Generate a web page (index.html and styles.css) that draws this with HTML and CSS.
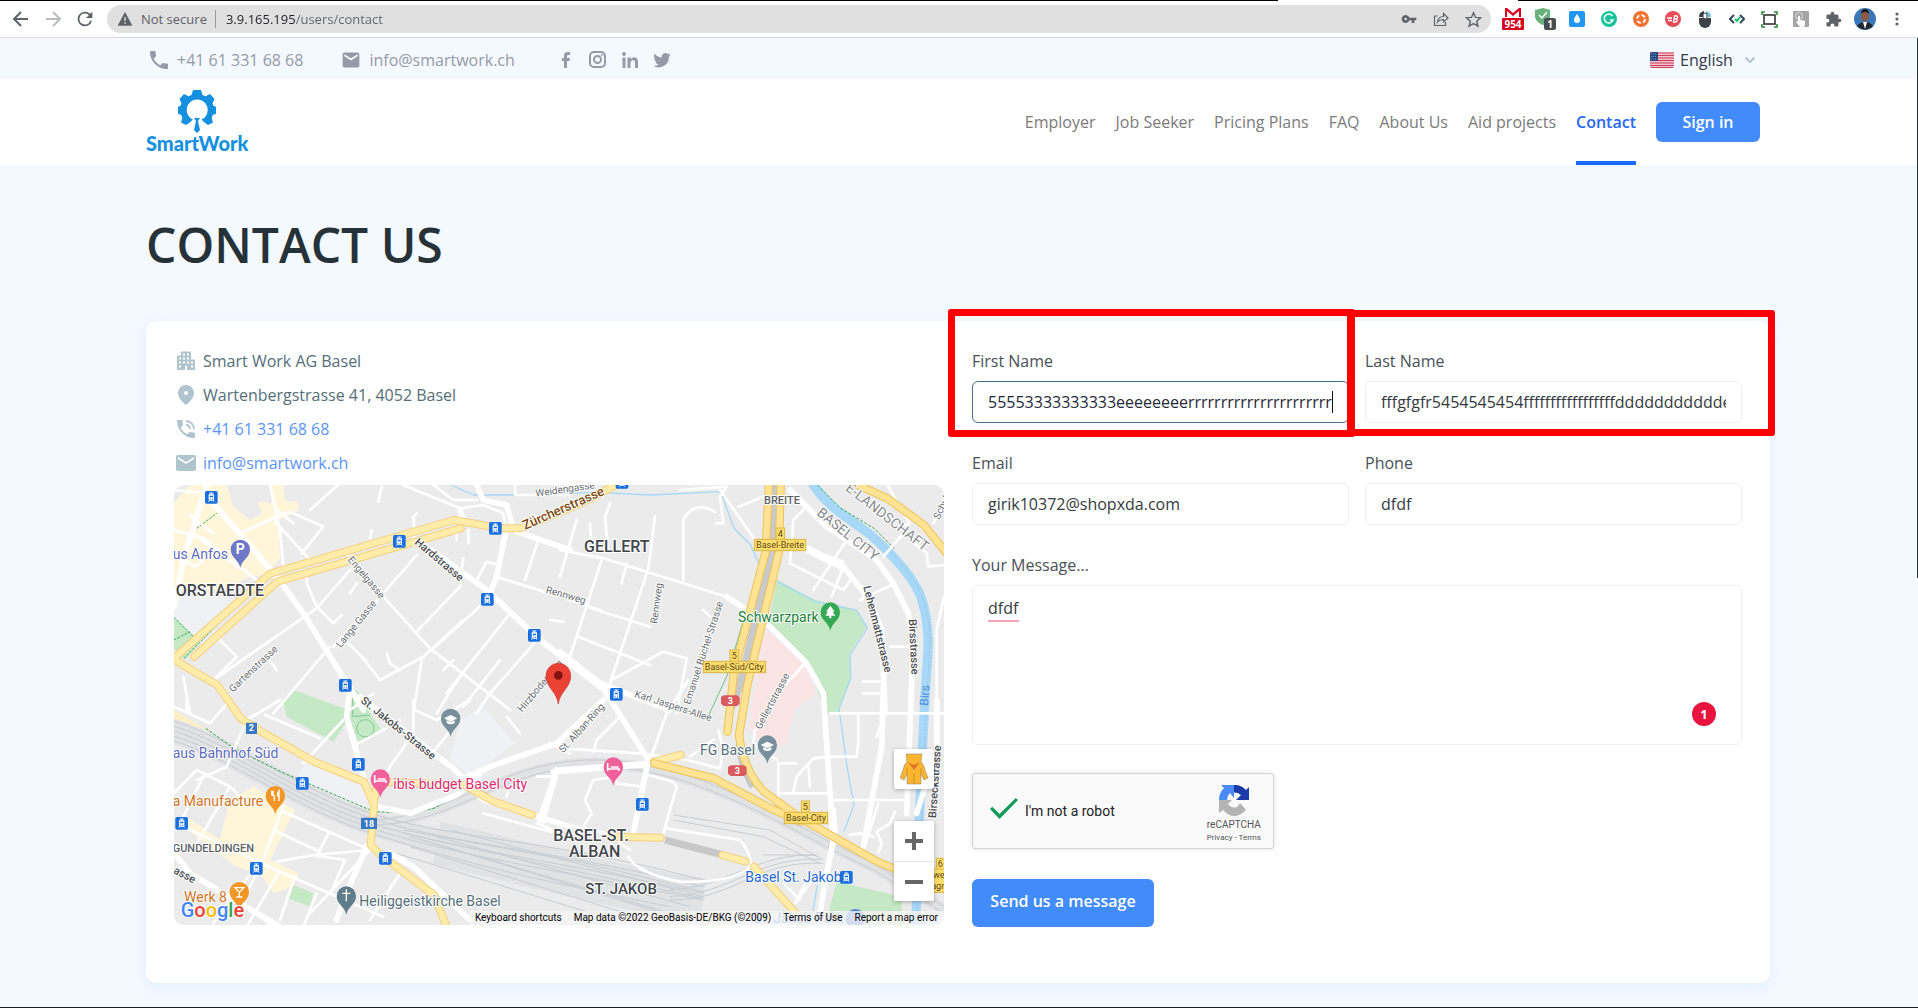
FILE: index.html
```html
<!DOCTYPE html>
<html lang="en">
<head>
<meta charset="utf-8">
<title>Contact us - SmartWork</title>
<link rel="stylesheet" href="styles.css">
</head>
<body>
<div class="chrome">
  <div class="tab-edge"><span></span></div>
  <div class="toolbar">
    <button class="slot" aria-label="Back"><svg width="24" height="24" viewBox="0 0 24 24" fill="none" stroke="#5f6368" stroke-width="2"><path d="M19 12H6M12 5l-7 7 7 7"/></svg></button>
    <button class="slot" aria-label="Forward"><svg width="24" height="24" viewBox="0 0 24 24" fill="none" stroke="#babcbe" stroke-width="2"><path d="M5 12h13M12 5l7 7-7 7"/></svg></button>
    <button class="slot" aria-label="Reload"><svg width="22" height="22" viewBox="0 0 24 24" fill="#5f6368"><path d="M17.65 6.35A8 8 0 1 0 19.73 14h-2.08A6 6 0 1 1 12 6c1.66 0 3.14.69 4.22 1.78L13 11h7V4z"/></svg></button>
    <div class="omnibox">
      <svg width="16" height="16" viewBox="0 0 24 24" fill="#5f6368"><path d="M1 22h22L12 1zm12-3h-2v-2h2zm0-4h-2V9h2z"/></svg>
      <span class="insecure">Not secure</span>
      <input class="url" aria-label="Address" value="3.9.165.195/users/contact">
      <button class="slot" aria-label="Passwords"><svg width="16" height="16" viewBox="0 0 24 24" fill="#5f6368"><path d="M12.65 10A6 6 0 1 0 12.65 14H16v4h4v-4h3v-4zM7 14a2 2 0 1 1 0-4 2 2 0 0 1 0 4z"/></svg></button>
      <button class="slot" aria-label="Share"><svg width="16" height="16" viewBox="0 0 16 16" fill="none" stroke="#5f6368" stroke-width="1.2"><path d="M4.5 5H1.500v9.500h11V11M4.500 11c.5-4 2.500-5.500 6-5.500V2.500L15 7l-4.500 4V8.500C8 8.500 6 9 4.500 11z"/></svg></button>
      <button class="slot" aria-label="Bookmark"><svg width="17" height="17" viewBox="0 0 24 24" fill="none" stroke="#5f6368" stroke-width="2"><path d="M12 2.500l2.900 6.600 7.100.6-5.400 4.700 1.600 7L12 17.700l-6.200 3.700 1.600-7L2 9.700l7.100-.6z"/></svg></button>
    </div>
    <div class="extensions">
      <button class="slot" aria-label="Mail checker"><svg width="22" height="22" viewBox="0 0 22 22"><path d="M3 0h16v10H3z" fill="#fff"/><path d="M3 9V0h2l6 5 6-5h2v9h-2V3l-6 5-6-5v6z" fill="#d8001d"/><rect y="10" width="22" height="12" rx="1" fill="#d8001d"/><text x="11" y="20" class="mark mark-10">954</text></svg></button>
      <button class="slot" aria-label="Ad guard"><svg width="22" height="22" viewBox="0 0 22 22"><path d="M1 2l8-2 7 2v7c0 4-3 6-7 8-5-2-8-5-8-9z" fill="#67b279"/><path d="M5 7l3 3 5-6" fill="none" stroke="#fff" stroke-width="1.500"/><rect x="10" y="10" width="12" height="12" rx="2" fill="#4a4d50"/><text x="16" y="20" class="mark mark-10">1</text></svg></button>
      <button class="slot" aria-label="Color picker"><svg width="16" height="16" viewBox="0 0 16 16"><rect width="16" height="16" rx="2" fill="#2196f3"/><path d="M8 3c2 3 3 4 3 6a3 3 0 0 1-6 0c0-2 1-3 3-6z" fill="#fff"/></svg></button>
      <button class="slot" aria-label="Grammar"><svg width="16" height="16" viewBox="0 0 16 16"><circle cx="8" cy="8" r="8" fill="#15c39a"/><path d="M11.500 5A4.500 4.500 0 1 0 12 9H9" fill="none" stroke="#fff" stroke-width="1.600"/></svg></button>
      <button class="slot" aria-label="Recorder"><svg width="16" height="16" viewBox="0 0 16 16"><circle cx="8" cy="8" r="8" fill="#f4712f"/><circle cx="8" cy="8" r="4" fill="none" stroke="#fff" stroke-width="2" stroke-dasharray="4 2.300"/></svg></button>
      <button class="slot" aria-label="Blaze"><svg width="16" height="16" viewBox="0 0 16 16"><circle cx="8" cy="8" r="8" fill="#e54b58"/><path d="M2 7h5M3 9.500h4M8.500 11l1-6h2.500q1.500 1.500-.5 3 1.500 1.500-.5 3zM9.500 8h2" fill="none" stroke="#fff" stroke-width="1.300"/></svg></button>
      <button class="slot" aria-label="Mouse"><svg width="14" height="18" viewBox="0 0 14 18"><path d="M1 8h12v4a6 6 0 0 1-12 0z" fill="#3d4248"/><path d="M1 7a6 6 0 0 1 5-6v6z" fill="#3d4248"/><path d="M13 7a6 6 0 0 0-5-6v6z" fill="#6ec1d8"/><rect x="5" y="3" width="4" height="6" rx="2" fill="#fff" stroke="#3d4248"/></svg></button>
      <button class="slot" aria-label="Code check"><svg width="16" height="12" viewBox="0 0 16 12" fill="none" stroke-width="2"><path d="M5 2L1 6l4 4M11 2l4 4-4 4" stroke="#33475b"/><path d="M6 6l2 2 3-4" stroke="#16c172"/></svg></button>
      <button class="slot" aria-label="Capture"><svg width="17" height="17" viewBox="0 0 17 17" fill="none"><rect x="3" y="4" width="11" height="9" stroke="#333" stroke-width="1.600"/><path d="M1 4V1h3M13 1h3v3M16 13v3h-3M4 16H1v-3" stroke="#2f8a36" stroke-width="1.600"/></svg></button>
      <button class="slot" aria-label="Touch"><svg width="16" height="16" viewBox="0 0 16 16"><rect width="16" height="16" rx="1" fill="#a5a5a5"/><circle cx="6" cy="5" r="3.500" fill="none" stroke="#ddd"/><path d="M5 5q1-1 2 0v4l5 1v4l-1 2H7l-4-5 2-1z" fill="#fff"/></svg></button>
      <button class="slot" aria-label="Extensions"><svg width="17" height="17" viewBox="0 0 24 24" fill="#5f6368"><path d="M20.500 11H19V7a2 2 0 0 0-2-2h-4V3.500a2.500 2.500 0 0 0-5 0V5H4a2 2 0 0 0-2 2v3.800h1.500a2.700 2.700 0 0 1 0 5.400H2V20a2 2 0 0 0 2 2h3.800v-1.500a2.700 2.700 0 0 1 5.400 0V22H17a2 2 0 0 0 2-2v-4h1.500a2.500 2.500 0 0 0 0-5z"/></svg></button>
      <button class="slot" aria-label="Profile"><svg width="22" height="22" viewBox="0 0 22 22"><circle cx="11" cy="11" r="11" fill="#3a78b8"/><path d="M3 18q3-4 8-4t8 4a11 11 0 0 1-16 0z" fill="#23272e"/><path d="M9 14h4l-2 7z" fill="#fff"/><ellipse cx="11" cy="8" rx="4" ry="5.500" fill="#8c5a45"/><path d="M7 6q0-5 4-5t4 5q-1-2-4-2t-4 2z" fill="#1b1a1c"/></svg></button>
      <button class="slot" aria-label="Menu"><svg width="4" height="16" viewBox="0 0 4 16" fill="#5f6368"><circle cx="2" cy="3" r="1.600"/><circle cx="2" cy="8" r="1.600"/><circle cx="2" cy="13" r="1.600"/></svg></button>
    </div>
  </div>
</div>

<div class="page">
  <div class="topbar">
    <div class="wrap topbar-row">
      <a class="top-link" href="#"><svg width="24" height="24" viewBox="0 0 24 24"><path d="M6.620 10.790c1.440 2.830 3.760 5.140 6.590 6.590l2.200-2.200c.27-.27.670-.36 1.020-.24 1.120.37 2.330.57 3.570.57.550 0 1 .450 1 1V20c0 .550-.45 1-1 1-9.390 0-17-7.610-17-17 0-.55.450-1 1-1h3.500c.550 0 1 .450 1 1 0 1.250.2 2.450.570 3.570.110.350.030.740-.25 1.020z"/></svg>+41 61 331 68 68</a>
      <a class="top-link top-mail" href="#"><svg width="20" height="20" viewBox="0 0 24 24"><path d="M20 3H4c-1.100 0-2 .9-2 2v14c0 1.100.9 2 2 2h16c1.100 0 2-.9 2-2V5c0-1.100-.9-2-2-2zm0 4.500l-8 5-8-5V5l8 5 8-5z"/></svg>info@smartwork.ch</a>
      <div class="social">
        <a href="#" aria-label="Facebook"><svg width="20" height="20" viewBox="0 0 20 20"><path d="M8 18v-7H6V8h2V6q0-4 3.500-4H14v3h-1.500Q11 5 11 6.300V8h3l-.5 3H11v7z"/></svg></a>
        <a href="#" aria-label="Instagram"><svg width="20" height="20" viewBox="0 0 20 20" fill="none" stroke="#949aa6" stroke-width="2"><rect x="2" y="2" width="15" height="15" rx="4"/><circle cx="9.500" cy="9.500" r="3.500"/><circle cx="14" cy="5" r=".3"/></svg></a>
        <a href="#" aria-label="LinkedIn"><svg width="20" height="20" viewBox="0 0 20 20"><circle cx="4" cy="4" r="2"/><path d="M2.500 7.500h3V18h-3zM7.500 7.500h3V9q3-3 6-1 1.500 1 1.500 4v6h-3v-5.500q0-2.500-2-2.500t-2.500 2.500V18h-3z"/></svg></a>
        <a href="#" aria-label="Twitter"><svg width="20" height="20" viewBox="0 0 24 24"><path d="M22.500 5.700c-.8.400-1.600.6-2.500.7.9-.5 1.600-1.400 1.900-2.400-.8.500-1.800.9-2.700 1.100a4.300 4.300 0 0 0-7.400 3.900C8.300 8.800 5.100 7.100 3 4.500a4.300 4.300 0 0 0 1.300 5.700c-.7 0-1.400-.2-1.900-.5a4.300 4.300 0 0 0 3.400 4.200c-.6.200-1.300.2-1.900.1a4.300 4.300 0 0 0 4 3A8.600 8.600 0 0 1 1.500 18.800 12.200 12.200 0 0 0 20.300 8c.9-.6 1.600-1.400 2.200-2.300z"/></svg></a>
      </div>
      <label class="language">
        <svg width="24" height="16" viewBox="0 0 24 16"><rect width="24" height="16" rx="2" fill="#f3c3cb"/><path d="M0 1h24M0 3.500h24M0 6h24M0 8.500h24M0 11h24M0 13.500h24M1 15.500h22" stroke="#d0405c" stroke-width="1.200"/><path d="M0 2q0-2 2-2h6v9H0z" fill="#274a80"/><path d="M1 2h6M1 4.500h6M1 7h6" stroke="#8fa5c8" stroke-width=".8" stroke-dasharray="1 1"/></svg>
        <select aria-label="Language"><option>English</option></select>
        <svg width="10" height="6" viewBox="0 0 10 6" fill="none" stroke="#b5c5cf" stroke-width="2"><path d="M.5.500L5 5 9.500.500"/></svg>
      </label>
    </div>
  </div>

  <header class="header">
    <div class="wrap header-row">
      <a class="logo" href="#">
        <svg width="40" height="44" viewBox="0 0 40 44"><path d="M16 1h8l1.500 5 3 1.200L33 5l4.500 5-2 4.500 1.200 2.500 2.300.8v7l-3.300 1.200-1 3 1.300 4.500-5 2.500-3.500-2.500-3-3a10.500 10.500 0 1 0-8.600 0l-3 3L9 36l-5-2.500L5.300 29l-1-3L1 24.800v-7l2.300-.8 1.200-2.500-2-4.500L7 5l4.500 2.200 3-1.200z"/><path d="M17 29h6l-2 3 2 9-3 3-3-3 2-9z"/></svg>
        <span>SmartWork</span>
      </a>
      <nav class="nav">
        <a href="#">Employer</a>
        <a href="#">Job Seeker</a>
        <a href="#">Pricing Plans</a>
        <a href="#">FAQ</a>
        <a href="#">About Us</a>
        <a href="#">Aid projects</a>
        <a class="current" href="#">Contact</a>
        <button class="btn btn-signin" type="button">Sign in</button>
      </nav>
    </div>
  </header>

  <main class="wrap main">
    <h1>CONTACT US</h1>
    <section class="card">
      <div class="info">
        <ul>
          <li><svg width="24" height="24" viewBox="0 0 24 24"><path fill-rule="evenodd" d="M3 6.500h4v-4h10v8h4V21h-8v-4h-2v4H3zm2 2v2h2v-2zm0 4v2h2v-2zm0 4v2h2v-2zm4-12v2h2v-2zm0 4v2h2v-2zm0 4v2h2v-2zm4-8v2h2v-2zm0 4v2h2v-2zm0 4v2h2v-2zm4 0v2h2v-2zm0 4v2h2v-2z"/></svg>Smart Work AG Basel</li>
          <li><svg width="24" height="24" viewBox="0 0 24 24"><path d="M12 2a8 8 0 0 0-8 8c0 4 3 8 8 12 5-4 8-8 8-12a8 8 0 0 0-8-8zm0 10a2 2 0 1 1 0-4 2 2 0 0 1 0 4z"/></svg>Wartenbergstrasse 41, 4052 Basel</li>
          <li><svg width="24" height="24" viewBox="0 0 24 24"><path d="M20 15.500c-1.250 0-2.450-.2-3.570-.57-.35-.11-.74-.03-1.020.24l-2.200 2.200a15 15 0 0 1-6.590-6.590l2.200-2.210c.28-.26.360-.65.250-1A11.400 11.400 0 0 1 8.500 4c0-.55-.45-1-1-1H4c-.55 0-1 .45-1 1 0 9.390 7.610 17 17 17 .55 0 1-.45 1-1v-3.500c0-.55-.45-1-1-1zM19 12h2a9 9 0 0 0-9-9v2c3.870 0 7 3.130 7 7zm-4 0h2c0-2.760-2.240-5-5-5v2c1.660 0 3 1.340 3 3z"/></svg><a href="#">+41 61 331 68 68</a></li>
          <li><svg width="24" height="24" viewBox="0 0 24 24"><path d="M20 4H4c-1.100 0-2 .9-2 2v12c0 1.100.9 2 2 2h16c1.100 0 2-.9 2-2V6c0-1.100-.9-2-2-2zm0 4l-8 5-8-5V6l8 5 8-5z"/></svg><a href="#">info@smartwork.ch</a></li>
        </ul>
        <div class="map">
          <svg class="map-canvas" viewBox="0 0 2310 1320" preserveAspectRatio="xMidYMid slice">
            <defs>
              <path id="pin" d="M0 56C-4 32-29 26-29 0A29 29 0 1 1 29 0C29 26 4 32 0 56Z"/>
              <g id="tram"><rect x="-19" y="-19" width="38" height="38" rx="5" fill="#1a6fe0"/><path d="M-6-13H6M0-13V-8" stroke="#fff" stroke-width="3"/><path fill-rule="evenodd" d="M-8-9H8V10H-8ZM-5-5H5V0H-5ZM-5 4H-2V7H-5ZM2 4H5V7H2Z" fill="#fff"/><path d="M-6 10l-3 4M6 10l3 4" stroke="#fff" stroke-width="2"/></g>
              <path id="shield3" d="M-28-12l8-5h40l8 5v20l-8 7h-40l-8-7z"/>
            </defs>
            <rect width="2310" height="1320" fill="#ebebeb"/>
            <!-- land use: north west, north east, south west, south east -->
            <g transform="translate(-12 -15)">
              <path fill="#fff6da" d="M12 70L60 15H170L190 80 240 120 275 100 265 65 310 70 305 15H340L345 60 388 70 380 95 325 120 330 235 290 285 240 290 150 330H12Z"/>
              <path fill="#eff1f4" d="M60 330L220 350 90 490 12 410V360Z"/>
              <path fill="#c5e8c5" d="M12 412L90 485 45 540 12 505ZM340 665L370 630 550 695 490 785 350 710Z"/>
              <path fill="none" stroke="#34a853" stroke-width="3" stroke-dasharray="8 4" d="M80 145L140 100M12 412L80 480M12 480L60 455M42 535L290 285"/>
            </g>
            <g transform="translate(1158 -15)">
              <path fill="#c5e8c5" d="M650 298L760 358 890 390 920 440 870 520 875 590 835 700 800 705 740 550 625 435Z"/>
              <path fill="#fbe5e4" d="M612 445L735 555 768 640 700 690 680 790 620 810 570 750 575 690Z"/>
            </g>
            <g transform="translate(-12 645)">
              <path fill="#fff0c4" d="M12 30L110 90 90 150 12 120Z"/>
              <path fill="#fff6da" d="M50 350L150 420 180 300 250 260 375 330 300 480 385 520 370 560 310 580 270 520 200 500 120 440 50 385Z"/>
              <path fill="#c5e8c5" d="M548-35L570-20 600 40 638 95 565 125 540 60ZM370 555L430 580 420 620 355 595Z"/>
              <path fill="none" stroke="#81c995" stroke-width="3" d="M548-20V50L600 45M560 85a26 26 0 1 0 52 0 26 26 0 1 0-52 0"/>
              <path fill="#eff1f4" d="M420 170L600 250 590 325 370 250ZM870 60L940 20 1035 130 900 230 840 180Z"/>
            </g>
            <g transform="translate(1158 645)"><path fill="#c5e8c5" d="M830 545L1025 590V680H795Z"/></g>
            <!-- railways -->
            <g fill="none" stroke="#dadde0" transform="translate(-12 645)">
              <path stroke-width="72" stroke="#e0e2e4" d="M0 90C180 140 380 300 620 375S1000 440 1330 560"/>
              <path stroke-width="130" stroke="#e0e2e4" d="M800 430C1000 470 1300 560 1600 600"/>
              <path stroke-width="34" stroke="#e0e2e4" d="M620 370C880 350 1000 180 1300 190S1850 380 2110 500L2340 640"/>
              <g stroke="#c8cdd1" stroke-width="3">
                <path d="M0 60C180 110 380 270 620 345S1100 410 1600 540M0 75C180 125 380 285 620 360S1100 440 1600 560M0 90C180 140 380 300 620 375S1100 470 1600 580M0 105C180 155 380 315 620 390S1100 500 1600 600M0 120C180 170 380 330 620 405S1000 520 1500 620"/>
                <path d="M620 360C880 340 1000 170 1300 180S1850 370 2110 490L2340 630M620 375C880 365 1000 190 1300 200S1850 390 2110 510L2340 650"/>
                <path d="M680 460L1330 660M720 440L1400 650M760 420L1480 640M800 410L1560 620M840 390L1600 590M700 390L1250 490 1600 575M700 400L1200 510 1600 595M720 410L1100 520 1500 640M1510 345L1800 390 1960 480M1510 360L1780 410 1950 490M1500 600C1700 600 1750 480 1960 490M1500 570C1680 560 1750 460 1940 465M1500 590C1690 580 1760 470 1950 478M1780 465H1940"/>
              </g>
              <path stroke="#c8c8c8" stroke-width="22" d="M1485 420L1660 465M1750 260Q1700 180 1710 90"/>
            </g>
            <!-- water -->
            <g fill="none" stroke="#a8d8f8">
              <path stroke-width="28" d="M1912 -10C1960 70 2035 105 2090 150C2170 220 2225 290 2242 340C2272 430 2262 510 2255 600C2245 800 2235 950 2225 1330"/>
              <path stroke-width="4" d="M830 0L900 30H1080L1270 22 1430 30 1640 20 1680 130 1730 180 1760 250M1810 290L1925 350 2048 375 2080 430 2028 510 2030 580 1995 670 2020 850 2040 960 2010 1040M1930 1200L1915 1290"/>
              <path stroke="#8aa0b0" stroke-width="2" stroke-dasharray="3 6" d="M2100 150C2175 220 2230 290 2247 340C2277 430 2267 510 2260 600L2228 1330"/>
            </g>
            <path fill="none" stroke="#34a853" stroke-width="3" stroke-dasharray="9 5" d="M1930 0L2000 70 2100 130 2160 190M95 730L180 790 320 860 600 980 700 985 780 970 870 920"/>
            <path fill="none" stroke="#34a853" stroke-width="2" d="M1710 400L1660 570 1600 700"/>
            <!-- minor streets -->
            <g class="street street-s">
              <g transform="translate(-12 -15)"><path d="M12 30L110 40M12 150L100 175 260 300M60 105L130 160M75 165L210 265M40 240L75 260 130 215M210 160L320 110 360 95 460 140M420 90L520 0M320 90L370 130M300 15L330 150 340 260M315 125L425 245M460 140L395 220M625 65L635 20M735 160L730 110 740 100M605 150L600 175M860 150V180M895 150V190M540 270L440 385 130 600M535 215V235L640 350 780 505 1020 690M740 225L640 340 490 500M560 310L540 340M410 280V310L440 380 490 430 515 405M880 235L870 320 740 455M940 370L785 510M915 310L950 245 985 255M980 290L1200 360 1290 390M1105 180L1065 300M985 290L960 340M1020 400L830 640M1110 470L960 640 920 700M480 500L310 700M535 490L580 535 630 600 760 530 880 420M650 520L660 550 690 570M755 540L730 700M820 570L850 540M875 580L800 700M990 540L880 680M150 480L200 530 130 600M290 530L320 570M40 590L60 700M700 15L870 85 880 120M790 15L850 60 920 60M870 85L940 75 1000 100 1005 130M1035 15V45H1200M540 690L610 640M1140 420L1180 425"/></g>
              <g transform="translate(1158 -15)"><path d="M0 210L130 235 500 350M90 130L95 200M50 120L0 290M150 70L135 110 145 215M285 110L265 265 150 610M125 240L30 530M370 300V120Q400 60 465 95M470 130H490L480 50 500 20 360 30M480 30L585 180M535 80L610 50M80 380L270 440M200 250L185 310M55 470L180 520 270 555M155 600L310 515 380 535 350 700M430 390L450 410M740 80L700 120 690 250 850 330 880 290M860 180L760 330M850 260L815 350M740 215L850 270M900 360L1005 310M735 550L670 620M720 200L850 245M1030 160L970 230M1050 180L1100 220 1105 260 1152 255M1120 130L1152 60M910 605H970M910 640H965M990 500H1045M1130 700V450L1152 350M985 20L1050 130 1020 140"/></g>
              <g transform="translate(-12 645)"><path d="M180 0L120 70 12 20M50 0V40M330 0L230 60 170 200 80 240M285 45L450 115M400 190L520 60M12 280L80 210 180 260 240 320M100 230L20 390M180 260L80 430M40 380L340 520 640 650M340 320L270 500 200 640M340 335L600 450 430 465 320 485M310 390L450 455M475 400L440 470M430 465L525 480 490 560M600 450L420 640M250 510L130 670M325 520L230 680M230 620L310 680M375 530L330 660M440 580L400 680M690 520L600 660M730 0L730 100 660 200 600 320M735 30L800 60 900 0M835 100L795 150M1100 230H1160L1120 370M1010 50L1050 100M1140 130L1200 160M1100 370L1150 390M1010 290L1020 260M565 130L620 100 690 60M940 340L1160 400"/></g>
              <g transform="translate(1158 645)"><path d="M0 145L240 160 380 180 480 205 490 150 475 90M100 155L110 120 180 50M270 180L320 40 385-60M390 170L460 120M265 225L340 245 350 260 310 400M245 260L170 250 165 220M170 230L100 240 75 300 95 340 70 380M205 470Q230 520 360 545 520 550 570 500 580 470 540 420L320 385M0 370L140 400 210 450M810 40H1150M655 290V190H710M700 275L710 230 760 175 820 170M660 280H810M745 200L750 260M650 180L580 130 585 90M895 40V130L890 170 820 170M960 80L950 110M820 300H1030M955 310L910 450M1005 335L990 370 950 395 965 430 955 455M870 405L900 400 940 410M670 550L720 600M740 540L705 610M750 550L720 590"/></g>
            </g>
            <g class="street street-l">
              <g transform="translate(-12 -15)"><path d="M110 15L40 240 12 380M130 70L320 290 400 400 580 690M735 175L950 330 1110 480 1290 620M1010 140L980 290 960 340M1040 155L1200 210M870 90L880 120M920 15L940 60 1010 75 1025 130"/></g>
              <g transform="translate(1158 -15)"><path d="M0 515L120 610M120 610L330 690M500 350L620 430 740 550 790 640 820 1090M745 205L850 260 930 360 965 450 975 700M690 30L800 140 950 240 1000 310 1045 400 1060 480 1040 1000"/></g>
              <g transform="translate(-12 645)"><path d="M540-40L530 50 600 300M570-10L850 205 940 300 1200 380M590 440L520 600 500 660M12 460L60 520 210 610 330 680M850 250L960 200 1160 130 1300 0M1160 210L1110 360M660 460L730 500 900 660M620 320L720 340 860 285 930 230M1150 215L1420 195"/></g>
              <g transform="translate(1158 645)"><path d="M120 -50L265 180 220 400M0 210L270 190M970-40L965 140 910 440M1130 0V150L1070 340M820 330L825 400 800 520 780 640"/></g>
            </g>
            <!-- main roads -->
            <g class="road-edge">
              <path d="M-12 530L290 265 840 105 980 130 1040 130 1220 55 1345 -10M60 515L310 290 860 130M-12 515L60 560 130 600 200 700 270 745 420 830 570 890 600 960 590 1080 620 1110 780 1230 820 1330M600 950L610 890 870 900 960 950 1075 990M1440 830L1520 810M1310 1055L1460 1058M1645 1110L1715 1130M1740 1145L1870 1290"/>
            </g>
            <g class="road-fill">
              <path d="M-12 530L290 265 840 105 980 130 1040 130 1220 55 1345 -10M60 515L310 290 860 130M-12 515L60 560 130 600 200 700 270 745 420 830 570 890 600 960 590 1080 620 1110 780 1230 820 1330M600 950L610 890 870 900 960 950 1075 990M1440 830L1520 810M1310 1055L1460 1058M1645 1110L1715 1130M1740 1145L1870 1290"/>
            </g>
            <path fill="none" stroke="#c8c9ca" stroke-width="26" d="M1805 -10L1795 200 1710 560 1670 670"/>
            <g class="highway-edge"><path d="M1785 -10L1775 200 1680 560 1660 740M1820 -10L1815 200 1720 600 1695 750Q1710 860 1770 920L1880 1000 2110 1130 2330 1220M1440 835L1620 880 1790 970 1880 1010M2030 -10L2140 40 2250 120 2330 220"/></g>
            <g class="highway"><path d="M1785 -10L1775 200 1680 560 1660 740M1820 -10L1815 200 1720 600 1695 750Q1710 860 1770 920L1880 1000 2110 1130 2330 1220M1440 835L1620 880 1790 970 1880 1010M2030 -10L2140 40 2250 120 2330 220"/></g>
            <!-- street names -->
            <g class="label label-street" transform="translate(-12 -15)">
              <text transform="translate(1098 50) rotate(-8)">Weidengasse</text>
              <text transform="translate(532 240) rotate(50)">Engelgasse</text>
              <text transform="translate(512 505) rotate(-51)">Lange Gasse</text>
              <text transform="translate(188 638) rotate(-43)">Gartenstrasse</text>
              <text transform="translate(1126 338) rotate(16)">Rennweg</text>
              <text transform="translate(1056 698) rotate(-50)">Hirzbodenweg</text>
              <text class="strong" transform="translate(732 190) rotate(40)">Hardstrasse</text>
              <text class="brown" transform="translate(1065 150) rotate(-24)">Zürcherstrasse</text>
            </g>
            <g class="label label-street" transform="translate(1158 -15)">
              <text transform="translate(292 432) rotate(-83)">Rennweg</text>
              <text transform="translate(390 675) rotate(-72)">Emanuel Büchel-Strasse</text>
              <text transform="translate(602 750) rotate(-62)">Gellertstrasse</text>
              <text transform="translate(222 650) rotate(18)">Karl Jaspers-Allee</text>
              <text transform="translate(10 820) rotate(-48)">St. Alban-Ring</text>
              <text transform="translate(1138 120) rotate(-65)">Schulstr.</text>
              <text class="strong" transform="translate(910 320) rotate(76)">Lehenmattstrasse</text>
              <text class="strong" transform="translate(1046 418) rotate(87)">Birsstrasse</text>
              <text class="water" transform="translate(1104 678) rotate(-86)">Birs</text>
            </g>
            <g class="label label-street" transform="translate(-12 645)">
              <text class="strong" transform="translate(570 5) rotate(39)">St. Jakobs-Strasse</text>
              <text class="strong" transform="translate(8 518) rotate(28)">asse</text>
            </g>
            <text class="label label-street strong" transform="translate(2286 1000) rotate(-86)">Birseckstrasse</text>
            <!-- districts -->
            <g class="label label-area">
              <text x="5" y="332">ORSTAEDTE</text>
              <text x="1230" y="202">GELLERT</text>
              <text class="area-s" x="1770" y="56">BREITE</text>
              <text class="border-name" transform="translate(1926 88) rotate(39)">BASEL CITY</text>
              <text class="border-name" transform="translate(2012 14) rotate(38)">E-LANDSCHAFT</text>
              <text class="area-s" x="-4" y="1102">GUNDELDINGEN</text>
              <text x="1138" y="1069">BASEL-ST.</text>
              <text x="1185" y="1117">ALBAN</text>
              <text x="1234" y="1227" class="area-m">ST. JAKOB</text>
            </g>
            <!-- places -->
            <g class="label label-place">
              <text x="-4" y="221" fill="#5c6bc0">us Anfos</text>
              <text x="-4" y="819" fill="#5c6bc0">aus Bahnhof Süd</text>
              <text x="1692" y="411" fill="#188038">Schwarzpark</text>
              <text x="658" y="912" fill="#e0286d">ibis budget Basel City</text>
              <text x="-4" y="963" fill="#d1731b">a Manufacture</text>
              <text x="30" y="1250" fill="#d1731b">Werk 8</text>
              <text x="556" y="1263" fill="#546e7a">Heiliggeistkirche Basel</text>
              <text x="1578" y="810" fill="#546e7a">FG Basel</text>
              <text x="1714" y="1190" fill="#1967d2">Basel St. Jakob</text>
              <text x="1738" y="1314" fill="#1967d2">St. Jakob Park</text>
            </g>
            <use href="#pin" x="199" y="193" fill="#6f78c8"/><text class="glyph" x="199" y="208">P</text>
            <use href="#pin" x="1969" y="381" fill="#34a853"/><path d="M1969 362l-13 18h6l-8 12h12v8h6v-8h12l-8-12h6z" fill="#fff"/>
            <use href="#pin" x="830" y="700" fill="#78909c"/><path d="M810 700l20-10 20 10-20 10zM818 706v8q12 8 24 0v-8l-12 6z" fill="#fff"/>
            <use href="#pin" x="1780" y="780" fill="#78909c"/><path d="M1760 780l20-10 20 10-20 10zM1768 786v8q12 8 24 0v-8l-12 6z" fill="#fff"/>
            <use href="#pin" x="619" y="882" fill="#f0609b"/><path d="M602 870v24M602 888h34v6M611 882h24" stroke="#fff" stroke-width="5" fill="none"/>
            <use href="#pin" x="1318" y="846" fill="#f0609b"/><path d="M1301 834v24M1301 852h34v6M1310 846h24" stroke="#fff" stroke-width="5" fill="none"/>
            <use href="#pin" x="304" y="932" fill="#f29727"/><path d="M297 917v10q0 6 4 6v15M293 917v9q0 6 8 6M315 917q-5 6-4 16h4zV948" stroke="#fff" stroke-width="4" fill="none"/>
            <use href="#pin" x="196" y="1220" fill="#f29727"/><path d="M183 1208h26l-13 14zM196 1220v16M187 1236h18" stroke="#fff" stroke-width="4" fill="none"/>
            <use href="#pin" x="517" y="1233" fill="#607d8b"/><path d="M517 1213v36M505 1225h24" stroke="#fff" stroke-width="4"/>
            <use href="#tram" x="112" y="37"/><use href="#tram" x="676" y="169"/><use href="#tram" x="964" y="130"/><use href="#tram" x="940" y="343"/><use href="#tram" x="1081" y="451"/><use href="#tram" x="514" y="601"/><use href="#tram" x="1327" y="628"/><use href="#tram" x="385" y="895"/><use href="#tram" x="553" y="838"/><use href="#tram" x="23" y="1015"/><use href="#tram" x="247" y="1150"/><use href="#tram" x="634" y="1120"/><use href="#tram" x="1405" y="958"/><use href="#tram" x="1344" y="-8"/><use href="#tram" x="2017" y="1177"/>
            <circle cx="2044" cy="1301" r="29" fill="#4d7fe0"/>
            <g class="exit">
              <rect x="1806" y="129" width="26" height="36"/><rect x="1741" y="163" width="154" height="34"/>
              <rect x="1668" y="495" width="26" height="36"/><rect x="1588" y="529" width="187" height="34"/>
              <rect x="1882" y="948" width="24" height="36"/><rect x="1831" y="982" width="130" height="34"/>
              <rect x="2287" y="1120" width="26" height="34"/><rect x="2250" y="1152" width="80" height="70"/>
            </g>
            <g class="exit-text">
              <text x="1819" y="157">4</text><text x="1818" y="189">Basel-Breite</text>
              <text x="1681" y="523">5</text><text x="1681" y="555">Basel-Süd/City</text>
              <text x="1894" y="976">5</text><text x="1896" y="1008">Basel-City</text>
              <text x="2299" y="1146">6</text><text x="2294" y="1179">we</text><text x="2294" y="1212">agn</text>
            </g>
            <use href="#shield3" x="1669" y="648" fill="#d95b5e"/><use href="#shield3" x="1690" y="858" fill="#d95b5e"/>
            <path fill="#3878c4" d="M216 713h33v34h-33zM561 998h48v34h-48z"/>
            <g class="route"><text x="1669" y="656">3</text><text x="1690" y="866">3</text><text x="232" y="739">2</text><text x="585" y="1025">18</text></g>
            <path d="M1153 657C1149 620 1116 608 1116 572A37 37 0 1 1 1190 572C1190 608 1157 620 1153 657Z" fill="#ea4335" stroke="#c5332b" stroke-width="2"/><circle cx="1153" cy="571" r="13" fill="#811411"/>
            <text class="google" x="20" y="1297"><tspan fill="#4285f4">G</tspan><tspan fill="#ea4335">o</tspan><tspan fill="#fbbc04">o</tspan><tspan fill="#4285f4">g</tspan><tspan fill="#34a853">l</tspan><tspan fill="#ea4335">e</tspan></text>
          </svg>
          <div class="map-tools">
            <button class="tool" type="button" aria-label="Street view"><svg width="28" height="32" viewBox="0 0 28 32"><path d="M6 1h16l-1 8q3 2 4 8l3 8-4 2-3-6v10H7V21l-3 6-4-2 3-8q1-6 4-8z" fill="#fbb52e" stroke="#80808080" stroke-width="1"/><path d="M8 9l6 3 6-3-6 8z" fill="#e2742a"/><path d="M14 21v10M7 15v6M21 15v6" stroke="#c98b2b"/></svg></button>
            <div class="zoom">
              <button class="tool" type="button" aria-label="Zoom in"><svg width="18" height="18"><path d="M0 9h18M9 0v18" stroke="#666" stroke-width="4"/></svg></button>
              <button class="tool" type="button" aria-label="Zoom out"><svg width="18" height="4"><path d="M0 2h18" stroke="#666" stroke-width="4"/></svg></button>
            </div>
          </div>
          <div class="map-legal"><a href="#">Keyboard shortcuts</a><span>Map data ©2022 GeoBasis-DE/BKG (©2009)</span><a href="#">Terms of Use</a><a href="#">Report a map error</a></div>
        </div>
      </div>

      <form class="form">
        <div class="field marked marked-first"><label for="first">First Name</label><input id="first" class="focused" value="55553333333333eeeeeeeerrrrrrrrrrrrrrrrrrrrrr"><span class="caret"></span></div>
        <div class="field marked marked-last"><label for="last">Last Name</label><input id="last" value="fffgfgfr5454545454fffffffffffffffffdddddddddddeee"></div>
        <div class="field"><label for="email">Email</label><input id="email" value="girik10372@shopxda.com"></div>
        <div class="field"><label for="phone">Phone</label><input id="phone" value="dfdf"></div>
        <div class="field wide"><label for="message">Your Message...</label>
          <div class="message"><textarea id="message" spellcheck="false">dfdf</textarea><span class="typo"></span><span class="count">1</span></div>
        </div>
        <div class="captcha wide">
          <label><input type="checkbox" checked>I'm not a robot</label>
          <div class="captcha-brand">
            <svg width="32" height="32" viewBox="0 0 32 32"><path d="M16 1C22 1 25 3 28 6l3-3v13H18l5-5q-3-3-7-2.500z" fill="#1c3aa9"/><path d="M16 1v13l-4-5q-3 3-3 7H1Q1 9 6 4L3 1z" fill="#4a8af4"/><path d="M1 16h13l-4 4q4 5 9 3l3-4 6 7Q16 38 5 26l-4 3z" fill="#b4b4b4"/></svg>
            <span class="captcha-name">reCAPTCHA</span>
            <span class="captcha-links"><a href="#">Privacy</a> - <a href="#">Terms</a></span>
          </div>
        </div>
        <button class="btn btn-send" type="button">Send us a message</button>
      </form>
    </section>
  </main>
  <div class="scroll-thumb"></div>
</div>
</body>
</html>
```
FILE: styles.css
```css
* { box-sizing: border-box; }
body {
  margin: 0;
  min-height: 100vh;
  display: flex;
  flex-direction: column;
  font: 16px/24px "Open Sans", sans-serif;
  color: #495057;
  background: #f4f8ff;
  border-bottom: 1px solid #1c1c2c;
}
a { color: inherit; text-decoration: none; }
button, input, textarea, select { font: inherit; color: inherit; margin: 0; }
button { border: 0; padding: 0; background: none; }
svg { display: block; flex: none; }

/* browser bar */
.chrome { background: #fff; border-bottom: 1px solid #dadce0; }
.tab-edge { height: 1px; background: #000; display: flex; justify-content: flex-end; padding-right: 400px; }
.tab-edge span { width: 240px; background: #fff; }
.toolbar { display: flex; align-items: center; height: 36px; padding: 0 5px; }
.slot { width: 32px; height: 28px; display: grid; place-items: center; flex: none; }
.omnibox {
  flex: 1;
  display: flex;
  align-items: center;
  height: 28px;
  margin: 0 6px;
  padding: 0 2px 0 10px;
  border-radius: 14px;
  background: #e0e0e0;
  font-size: 13px;
  line-height: 18px;
}
.insecure { margin-left: 8px; padding-right: 8px; border-right: 1px solid #9a9c9f; color: #5f6368; }
.url {
  flex: 1;
  min-width: 0;
  border: 0;
  padding: 0 0 0 10px;
  color: transparent;
  background: linear-gradient(to right, #202124 80px, #5f6368 80px);
  -webkit-background-clip: text;
  background-clip: text;
}
.extensions { display: flex; }
.mark { fill: #fff; font-weight: 700; text-anchor: middle; }
.mark-10 { font-size: 10px; }

/* site header */
.page { position: relative; flex: 1; padding-bottom: 24px; }
.topbar, .header, .main { padding-right: 2px; }
.wrap { max-width: 1624px; margin: 0 auto; }
.main { max-width: 1626px; }
.topbar-row { display: flex; align-items: center; height: 41px; padding-top: 2px; color: #949aa6; }
.topbar-row svg { fill: currentColor; }
.top-link { display: flex; align-items: center; gap: 8px; }
.top-link:first-child { padding-left: 1px; gap: 6px; }
.top-mail { margin-left: 38px; }
.social { display: flex; gap: 12px; margin-left: 41px; }
.social a:nth-child(2) svg { fill: none; }
.language { margin-left: auto; display: flex; align-items: center; gap: 6px; padding-right: 15px; color: #343a46; }
.language svg:last-child { fill: none; margin-left: 6px; }
.language select { appearance: none; border: 0; background: none; padding: 0; height: 24px; }
.header { background: #fff; }
.header-row { display: flex; justify-content: space-between; align-items: stretch; height: 86px; padding-right: 10px; }
.logo { display: flex; flex-direction: column; align-items: center; padding-top: 10px; color: #1490de; font: 900 20px/20px Lato, sans-serif; }
.logo svg { fill: currentColor; }
.nav { display: flex; align-items: center; gap: 20px; color: #7a7a7a; }
.nav a { height: 86px; line-height: 86px; border-bottom: 0 solid #176bf8; }
.nav .current { color: #2568f5; font-weight: 600; border-bottom-width: 4px; }
.btn { background: #418bfa; color: #fff; font-weight: 600; border-radius: 6px; }
.btn-signin { width: 104px; height: 40px; }

/* contact card */
h1 { margin: 0; padding: 50px 0 46px; font-size: 48px; line-height: 60px; font-weight: 600; color: #263238; }
.card {
  display: grid;
  grid-template-columns: 1fr 1fr;
  gap: 28px;
  padding: 28px 28px 56px;
  background: #fff;
  border-radius: 10px;
  box-shadow: 0 3px 12px #cfe8fa88;
}
.info ul { list-style: none; margin: 0 0 10px; padding: 0; display: grid; gap: 10px; color: #546e7a; }
.info li { display: flex; align-items: center; gap: 5px; }
.info li svg { fill: #b0c4ce; }
.info li a { color: #5a94fb; }

/* map */
.map { position: relative; height: 440px; border-radius: 10px; overflow: hidden; font-family: Roboto, sans-serif; }
.map-canvas { width: 100%; height: 100%; }
.street { fill: none; stroke: #fff; stroke-linejoin: round; stroke-linecap: round; }
.street-s { stroke-width: 8px; }
.street-l { stroke-width: 17px; }
.road-edge, .road-fill, .highway-edge, .highway { fill: none; stroke-linejoin: round; stroke-linecap: round; }
.road-edge { stroke: #f5cf7e; stroke-width: 24px; }
.road-fill { stroke: #ffeca8; stroke-width: 18px; }
.highway-edge { stroke: #edc25c; stroke-width: 25px; }
.highway { stroke: #ffe392; stroke-width: 19px; }
.label { stroke: #fff; stroke-width: 6px; stroke-linejoin: round; paint-order: stroke; }
.label-street { font-size: 30px; fill: #686c70; }
.label-street .strong, .strong { fill: #4a4d50; font-weight: 500; font-size: 33px; }
.label-street .brown { fill: #7c4a12; font-weight: 500; font-size: 39px; }
.label-street .water { fill: #4a90d9; stroke: none; font-size: 36px; }
.label-area { font-size: 48px; font-weight: 500; fill: #414549; }
.label-area .area-s { font-size: 33px; fill: #5c6064; }
.label-area .area-m { font-size: 45px; }
.label-area .border-name { font-size: 42px; font-weight: 400; fill: #85898d; }
.label-place { font-size: 42px; }
.glyph { fill: #fff; font-size: 42px; font-weight: 700; text-anchor: middle; }
.exit { fill: #fddc69; stroke: #dcb544; stroke-width: 3px; }
.exit-text { fill: #5c4a1e; font-size: 27px; text-anchor: middle; }
.route { fill: #fff; font-size: 27px; font-weight: 700; text-anchor: middle; }
.google { font-size: 60px; font-weight: 500; stroke: #fff; stroke-width: 6px; paint-order: stroke; }
.map-tools { position: absolute; right: 10px; bottom: 24px; display: grid; gap: 32px; }
.tool { width: 40px; height: 40px; display: grid; place-items: center; background: #fff; border-radius: 2px; }
.map-tools > .tool, .zoom { box-shadow: 0 1px 4px #0000004d; border-radius: 2px; }
.zoom { background: #fff; }
.zoom .tool + .tool { border-top: 1px solid #e6e6e6; }
.map-legal { position: absolute; right: 0; bottom: 0; display: flex; gap: 12px; padding: 0 6px; font-size: 10px; line-height: 14px; color: #000; background: #f5f5f5cc; }

/* form */
.form { display: grid; grid-template-columns: 1fr 1fr; gap: 28px 16px; align-content: start; }
.wide { grid-column: 1 / -1; }
.field { position: relative; display: grid; gap: 8px; }
.field input, textarea { width: 100%; border: 1px solid #edf0f3; border-radius: 6px; background: #fff; color: #343a40; padding: 8px 15px; outline: 0; }
.field input { height: 42px; }
.field .focused { border-color: #46708a; color: #1f2937; }
.caret { position: absolute; right: 16px; bottom: 10px; width: 1px; height: 22px; background: #111; }
.marked::after { content: ""; position: absolute; border: 7px solid #f00; border-radius: 3px; pointer-events: none; z-index: 1; }
.marked-first::after { inset: -40px -6px -14px -24px; }
.marked-last::after { inset: -39px -33px -13px -18px; }
.message { position: relative; }
textarea { display: block; height: 160px; resize: none; padding-top: 10px; }
.typo { position: absolute; left: 16px; top: 35px; width: 31px; height: 2px; background: #f5a3b5; }
.count { position: absolute; right: 26px; bottom: 19px; width: 24px; height: 24px; border-radius: 50%; background: #e9133f; color: #fff; font-size: 13px; font-weight: 700; text-align: center; }
.captcha {
  display: flex;
  justify-content: space-between;
  align-items: center;
  width: 302px;
  height: 76px;
  margin-bottom: 2px;
  padding: 0 12px 0 17px;
  border: 1px solid #d3d3d3;
  border-radius: 3px;
  background: #f9f9f9;
  box-shadow: 0 0 4px 1px #00000014;
  color: #222;
  font-family: Roboto, sans-serif;
  font-size: 14px;
}
.captcha label { display: flex; align-items: center; gap: 7px; }
.captcha input { appearance: none; width: 28px; height: 21px; margin: 0 0 5px; background: #0f9d58; clip-path: polygon(0 52%, 8% 42%, 34% 76%, 92% 0, 100% 9%, 34% 100%); }
.captcha-brand { display: flex; flex-direction: column; align-items: center; color: #555; padding-top: 6px; }
.captcha-name { font-size: 10px; line-height: 14px; margin-top: 2px; }
.captcha-links { font-size: 8px; line-height: 12px; }
.btn-send { width: 182px; height: 48px; padding-bottom: 4px; }
.scroll-thumb { position: absolute; right: 0; top: 0; width: 1px; height: 540px; background: #2a3440; }
```
